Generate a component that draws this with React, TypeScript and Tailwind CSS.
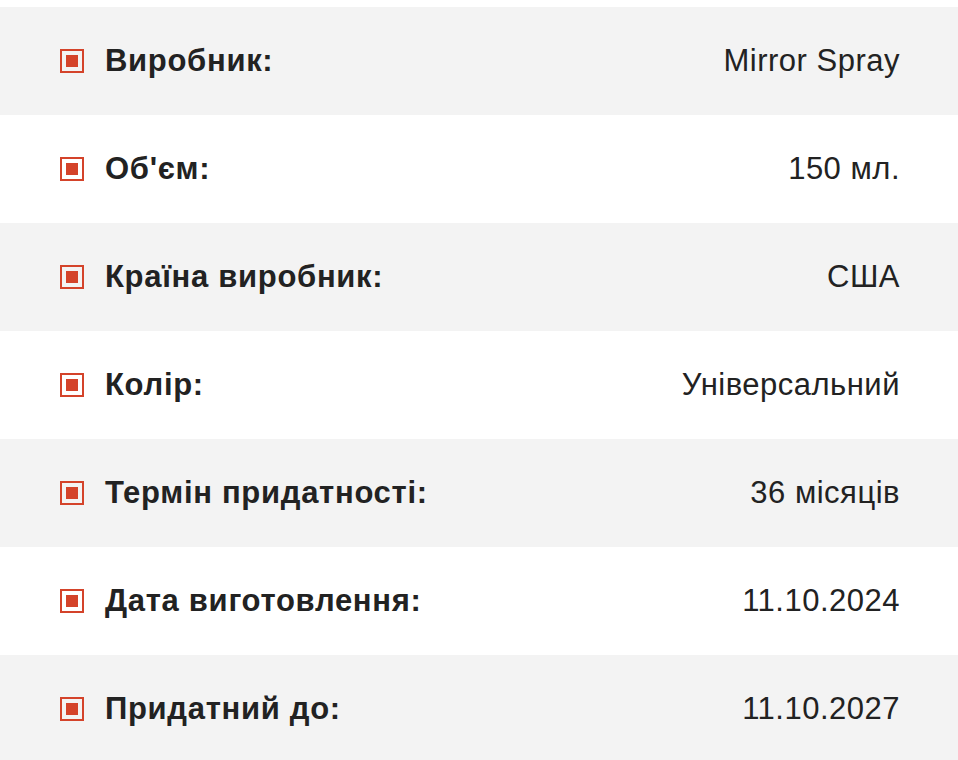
const rows = [
  { label: 'Виробник:', value: 'Mirror Spray' },
  { label: "Об'єм:", value: '150 мл.' },
  { label: 'Країна виробник:', value: 'США' },
  { label: 'Колір:', value: 'Універсальний' },
  { label: 'Термін придатності:', value: '36 місяців' },
  { label: 'Дата виготовлення:', value: '11.10.2024' },
  { label: 'Придатний до:', value: '11.10.2027' },
]

function Marker() {
  return (
    <span className="flex items-center justify-center w-[24px] h-[24px] border-2 border-[#d4432a] shrink-0">
      <span className="w-[12px] h-[12px] bg-[#d4432a]" />
    </span>
  )
}

export default function App() {
  return (
    <div
      className="min-h-screen bg-white pt-[7px] text-[#222]"
      style={{ fontFamily: '"Liberation Sans", Arial, sans-serif' }}
    >
      {rows.map((row, i) => (
        <div
          key={row.label}
          className={`flex items-center justify-between h-[108px] pl-[60px] pr-[58px] ${i % 2 === 0 ? 'bg-[#f3f3f3]' : 'bg-white'}`}
        >
          <div className="flex items-center gap-[21px]">
            <Marker />
            <span className="text-[31px] font-bold tracking-[0.7px]">{row.label}</span>
          </div>
          <span className="text-[31px] tracking-[0.5px]">{row.value}</span>
        </div>
      ))}
    </div>
  )
}
